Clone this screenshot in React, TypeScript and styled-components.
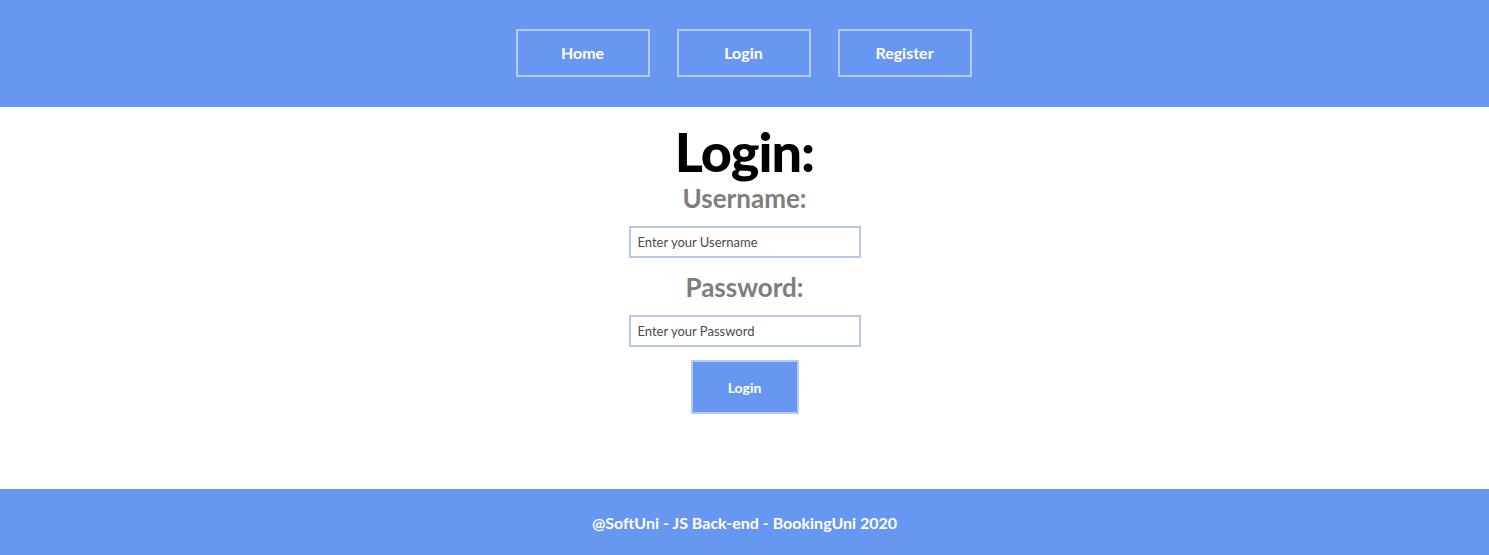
import React from "react";
import styled, { createGlobalStyle } from "styled-components";

const GlobalStyle = createGlobalStyle`
  html, body { margin: 0; padding: 0; background: #ffffff; }
  body { font-family: "Lato", "Open Sans", sans-serif; }
  * { box-sizing: border-box; }
`;

const Page = styled.div`
  display: flex;
  flex-direction: column;
  min-height: 555px;
`;

const Header = styled.header`
  background: #6897f2;
  height: 107px;
  display: flex;
  justify-content: center;
  align-items: center;
  gap: 27px;
  padding-right: 2px;
  padding-bottom: 2px;
`;

const NavLink = styled.a`
  display: flex;
  align-items: center;
  justify-content: center;
  width: 134px;
  height: 48px;
  border: 2px solid #b4cbf2;
  color: #ffffff;
  font-weight: 700;
  font-size: 16px;
  text-decoration: none;
  cursor: pointer;
`;

const Main = styled.main`
  flex: 1;
  display: flex;
  flex-direction: column;
  align-items: center;
  padding-top: 14px;
`;

const Title = styled.h1`
  margin: 0;
  font-size: 54px;
  font-weight: 900;
  color: #000;
  line-height: 62px;
  letter-spacing: -1px;
`;

const Form = styled.form`
  display: flex;
  flex-direction: column;
  align-items: center;
`;

const Label = styled.label<{ $top: number }>`
  margin-top: ${(p) => p.$top}px;
  font-size: 26px;
  font-weight: 700;
  color: #807d7b;
  line-height: 30px;
`;

const Input = styled.input`
  margin-top: 13px;
  width: 232px;
  height: 32px;
  border: 2px solid #b5c8e6;
  padding: 0 7px;
  font-family: "Lato", sans-serif;
  font-size: 13px;
  color: #333;
  outline: none;
  &::placeholder { color: #4a4a4a; }
`;

const Submit = styled.button`
  margin-top: 13px;
  width: 108px;
  height: 54px;
  background: #6897f2;
  border: 2px solid #b4cbf2;
  color: #fff;
  font-family: "Lato", sans-serif;
  font-weight: 700;
  font-size: 14px;
  cursor: pointer;
`;

const Footer = styled.footer`
  background: #6897f2;
  height: 66px;
  display: flex;
  align-items: center;
  justify-content: center;
  color: #fff;
  font-weight: 700;
  font-size: 16px;
`;

export default function App() {
  return (
    <Page>
      <GlobalStyle />
      <Header>
        <NavLink>Home</NavLink>
        <NavLink>Login</NavLink>
        <NavLink>Register</NavLink>
      </Header>
      <Main>
        <Title>Login:</Title>
        <Form onSubmit={(e) => e.preventDefault()}>
          <Label $top={0}>Username:</Label>
          <Input type="text" placeholder="Enter your Username" />
          <Label $top={14}>Password:</Label>
          <Input type="password" placeholder="Enter your Password" />
          <Submit type="submit">Login</Submit>
        </Form>
      </Main>
      <Footer>@SoftUni - JS Back-end - BookingUni 2020</Footer>
    </Page>
  );
}
